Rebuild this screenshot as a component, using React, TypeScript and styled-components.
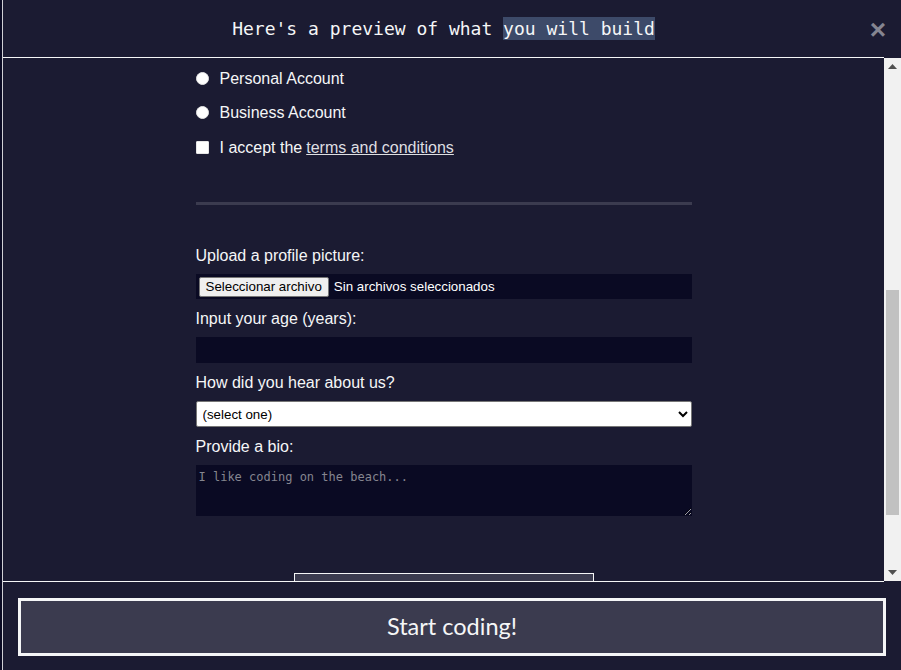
import React from "react";
import styled, { createGlobalStyle } from "styled-components";

const GlobalStyle = createGlobalStyle`
  html, body {
    margin: 0;
    padding: 0;
    background: #0a0a23;
  }
  body {
    width: 901px;
    height: 670px;
    overflow: hidden;
  }
  * { box-sizing: border-box; }
`;

const Modal = styled.div`
  margin-left: 2px;
  border-left: 1px solid #d0d0d5;
  height: 670px;
  background: #1b1b32;
  display: flex;
  flex-direction: column;
`;

const Header = styled.header`
  height: 57px;
  flex: none;
  display: grid;
  grid-template-columns: 1fr auto 1fr;
  align-items: center;
  padding-right: 17px;
`;

const Title = styled.h2`
  grid-column: 2;
  margin: 0;
  font-family: "DejaVu Sans Mono", monospace;
  font-size: 18px;
  font-weight: normal;
  color: #f5f6f7;
  white-space: pre;
  line-height: 23px;
  margin-top: -1px;
`;

const Highlight = styled.span`
  background: #3d4a69;
  display: inline-block;
  line-height: 23px;
`;

const Close = styled.button`
  grid-column: 3;
  justify-self: end;
  margin-right: -2px;
  margin-top: 2px;
  border: none;
  background: transparent;
  padding: 0;
  color: #858591;
  font-family: "Liberation Sans", Arial, sans-serif;
  font-weight: bold;
  font-size: 28px;
  line-height: 28px;
`;

const Body = styled.div`
  height: 525px;
  flex: none;
  display: flex;
`;

const Viewport = styled.div`
  flex: 1;
  border-top: 1px solid #f5f6f7;
  border-bottom: 1px solid #f5f6f7;
  overflow: hidden;
`;

const Form = styled.form`
  width: 496px;
  margin: 0 auto;
  padding-top: 3px;
  display: flex;
  flex-direction: column;
  font-family: "Liberation Sans", Arial, sans-serif;
  font-size: 16px;
  color: #f5f6f7;
`;

const ChoiceRow = styled.label<{ $h: number }>`
  height: ${(p) => p.$h}px;
  display: flex;
  align-items: center;
  line-height: 18px;
  padding-top: 2px;
`;

const Radio = styled.input`
  appearance: none;
  width: 13px;
  height: 13px;
  margin: -1px 11px 0 0;
  border-radius: 50%;
  background: #ffffff;
  border: 1px solid #e6e6e6;
`;

const Check = styled.input`
  appearance: none;
  width: 13px;
  height: 13px;
  margin: -1px 11px 0 0;
  border-radius: 1px;
  background: #ffffff;
  border: 1px solid #e6e6e6;
`;

const Link = styled.a`
  color: #dfdfe2;
  text-decoration: underline;
  margin-left: 4px;
`;

const Divider = styled.hr`
  width: 100%;
  height: 3px;
  margin: 38px 0 31px;
  border: none;
  background: #3b3b4f;
`;

const Label = styled.label`
  display: block;
  padding: 11px 0 9px;
  line-height: 18px;
`;

const FileField = styled.div`
  height: 25px;
  background: #0a0a23;
  display: flex;
  align-items: center;
  padding-left: 3px;
  font-family: "Liberation Sans", Arial, sans-serif;
  font-size: 13.33px;
  color: #ffffff;
`;

const FileButton = styled.button`
  height: 20px;
  padding: 0 6px;
  margin-right: 5px;
  background: #efefef;
  border: 1px solid #767676;
  border-radius: 2px;
  font-family: "Liberation Sans", Arial, sans-serif;
  font-size: 13.33px;
  color: #000000;
  line-height: 18px;
`;

const TextInput = styled.input`
  height: 26px;
  width: 100%;
  border: none;
  background: #0a0a23;
  color: #ffffff;
  padding: 0 3px;
`;

const Select = styled.select`
  height: 26px;
  width: 100%;
  background: #ffffff;
  color: #000000;
  border: 1px solid #767676;
  border-radius: 2px;
  font-family: "Liberation Sans", Arial, sans-serif;
  font-size: 13.33px;
  padding: 0 2px;
`;

const TextArea = styled.textarea`
  height: 51px;
  width: 100%;
  border: none;
  background: #0a0a23;
  color: #ffffff;
  font-family: "DejaVu Sans Mono", monospace;
  font-size: 12px;
  line-height: 15px;
  padding: 5px 3px 3px;
  resize: both;
  &::placeholder {
    color: #85858f;
  }
`;

const Submit = styled.button`
  width: 300px;
  height: 40px;
  margin: 57px auto 0;
  background: #3b3b4f;
  border: 1px solid #f5f6f7;
  color: #f5f6f7;
  flex: none;
`;

const Scrollbar = styled.div`
  width: 17px;
  flex: none;
  margin: 1px 0 1px;
  background: #f1f1f1;
  display: flex;
  flex-direction: column;
`;

const ArrowButton = styled.div`
  height: 17px;
  flex: none;
  display: flex;
  align-items: center;
  justify-content: center;
`;

const Track = styled.div`
  flex: 1;
  display: flex;
  flex-direction: column;
`;

const Thumb = styled.div<{ $top: number; $h: number }>`
  margin: ${(p) => p.$top}px 2px 0;
  height: ${(p) => p.$h}px;
  background: #c1c1c1;
`;

const Footer = styled.footer`
  flex: 1;
  padding: 16px 15px 14px;
`;

const StartButton = styled.button`
  width: 100%;
  height: 58px;
  background: #3b3b4f;
  border: 3px solid #f5f6f7;
  color: #f5f6f7;
  font-family: Lato, "Liberation Sans", sans-serif;
  font-size: 23.5px;
  padding: 0 0 2px;
`;

const Arrow = ({ up }: { up: boolean }) => (
  <svg width="9" height="5" viewBox="0 0 9 5">
    <polygon points={up ? "0,5 9,5 4.5,0" : "0,0 9,0 4.5,5"} fill="#505050" />
  </svg>
);

export default function App() {
  return (
    <>
      <GlobalStyle />
      <Modal>
        <Header>
          <Title>
            Here's a preview of what <Highlight>you will build</Highlight>
          </Title>
          <Close aria-label="Close">×</Close>
        </Header>
        <Body>
          <Viewport>
            <Form>
              <ChoiceRow $h={34}>
                <Radio type="radio" name="acct" />
                Personal Account
              </ChoiceRow>
              <ChoiceRow $h={34}>
                <Radio type="radio" name="acct" />
                Business Account
              </ChoiceRow>
              <ChoiceRow $h={35}>
                <Check type="checkbox" />
                I accept the<Link href="#">terms and conditions</Link>
              </ChoiceRow>
              <Divider />
              <Label>Upload a profile picture:</Label>
              <FileField>
                <FileButton type="button">Seleccionar archivo</FileButton>
                Sin archivos seleccionados
              </FileField>
              <Label>Input your age (years):</Label>
              <TextInput type="number" />
              <Label>How did you hear about us?</Label>
              <Select defaultValue="">
                <option value="">(select one)</option>
              </Select>
              <Label>Provide a bio:</Label>
              <TextArea placeholder="I like coding on the beach..." />
              <Submit type="button" aria-label="Submit" />
            </Form>
          </Viewport>
          <Scrollbar>
            <ArrowButton>
              <Arrow up />
            </ArrowButton>
            <Track>
              <Thumb $top={215} $h={225} />
            </Track>
            <ArrowButton>
              <Arrow up={false} />
            </ArrowButton>
          </Scrollbar>
        </Body>
        <Footer>
          <StartButton>Start coding!</StartButton>
        </Footer>
      </Modal>
    </>
  );
}
